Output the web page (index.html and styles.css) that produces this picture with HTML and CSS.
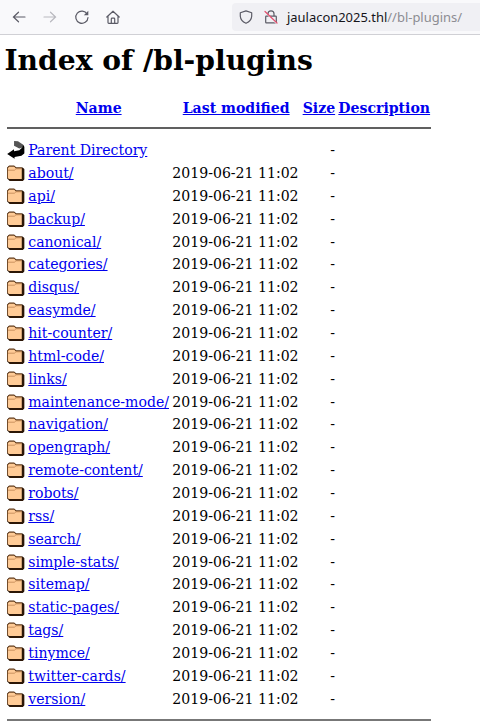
FILE: index.html
```html
<!DOCTYPE html>
<html lang="en">
<head>
<meta charset="utf-8">
<title>Index of /bl-plugins</title>
<link rel="stylesheet" href="styles.css">
</head>
<body>
<svg class="defs" width="0" height="0" aria-hidden="true">
  <symbol id="folder" viewBox="0 0 20 22">
    <path d="M.2 5 2.2 3H8.4L10.4 5H17.8L20 7.2V18.4L18 20.4H3L.2 17.6z" fill="#2b1606"/>
    <path d="M1 5.6 2.6 4H8L10 6H16.8V18.2H2.2L1 17z" fill="#ffcb96"/>
    <path d="M1 8.2H8.4L10.2 6.6H16.6" fill="none" stroke="#b67c48" stroke-width=".8"/>
    <path d="M.6 17.4V5.4L2.5 3.4H8.2L10.2 5.4H17" fill="none" stroke="#7a4c22" stroke-width=".8"/>
  </symbol>
  <symbol id="back" viewBox="0 0 20 22">
    <path d="M8 1 12.5 1.4 18 5V8.6L14 9.6 8 6.4z" fill="#555"/>
    <path d="M18 4.8 20 8V15L16.4 18 8.6 19.2V21.2L.2 16 8 10.4V12.8L14 11.6 17.4 8.4z" fill="#000"/>
  </symbol>
</svg>
<header class="toolbar">
  <svg class="nav" viewBox="0 0 16 16"><path d="M14 8H2.3M7.5 3.2 2.5 8l5 4.8"/></svg>
  <svg class="nav off" viewBox="0 0 16 16"><path d="M2 8h11.7M8.5 3.2l5 4.8-5 4.8"/></svg>
  <svg class="nav" viewBox="0 0 16 16"><path d="M13.2 5.2A6.1 6.1 0 1 0 14 8.5"/><path class="solid" d="M14.3 1.8v4.5H9.8z"/></svg>
  <svg class="nav" viewBox="0 0 16 16"><path d="M1.8 8 8 2.2 14.2 8M3 7.3v6.2q0 .8.8.8h8.4q.8 0 .8-.8V7.3M6.3 14V10q0-.8.8-.8h1.8q.8 0 .8.8v4"/></svg>
  <div class="urlbar">
    <svg class="shield" viewBox="0 0 14 14"><path d="M7 .9 12.7 2.8V6.3Q12.4 11 7 13.3 1.6 11 1.3 6.3V2.8z"/></svg>
    <svg class="lock" viewBox="0 0 14 14"><path d="M4 6V3.8a3 3 0 0 1 6 0V6M2.3 6.1h9.4q.6 0 .6.6v5.6q0 .6-.6.6H2.3q-.6 0-.6-.6V6.7q0-.6.6-.6z"/><path class="halo" d="M1.2 2.4 12.6 13.6"/><path class="slash" d="M1 1.5 13 13"/></svg>
    <span class="url">jaulacon2025.thl<span class="path">//bl-plugins/</span></span>
  </div>
</header>
<main>
  <h1>Index of /bl-plugins</h1>
  <div class="listing" id="listing">
    <div class="row head"><span></span><a href="#">Name</a><a href="#">Last modified</a><a href="#">Size</a><a href="#">Description</a></div>
    <hr>
    <div class="row"><svg class="icon"><use href="#back"/></svg><a href="#">Parent Directory</a><span></span><span class="size">-</span></div>
  </div>
</main>
<script src="listing.js"></script>
</body>
</html>
```
FILE: styles.css
```css
body {
  margin: 0;
  background: #fff;
  color: #000;
  font: 14.08px "DejaVu Serif", serif;
  overflow: hidden;
}
.defs { position: absolute; }
.toolbar {
  box-sizing: border-box;
  height: 35px;
  padding: 3px 0 4px 10.5px;
  display: flex;
  align-items: center;
  gap: 15.5px;
  background: #f9f9fb;
  border-bottom: 1px solid #d0d0d5;
}
.toolbar svg {
  flex: none;
  fill: none;
  stroke: #5b5b66;
  stroke-width: 1.2;
  stroke-linecap: round;
  stroke-linejoin: round;
}
.nav { width: 16px; height: 16px; }
.toolbar .off { stroke: #b9b9bf; }
.toolbar .solid { fill: #5b5b66; stroke: none; }
.urlbar {
  flex: 1;
  height: 28px;
  margin-left: 95.5px;
  padding-left: 7px;
  display: flex;
  align-items: center;
  background: #f0f0f4;
  border-radius: 4px 0 0 4px;
}
.shield { width: 14px; height: 14px; }
.lock { width: 14px; height: 14px; margin-left: 11px; }
.toolbar .halo { stroke: #f0f0f4; }
.toolbar .slash { stroke: #e2506f; }
.url {
  margin-left: 9px;
  font: 12.95px "Noto Sans", sans-serif;
  color: #15141a;
  white-space: nowrap;
}
.path { color: #8c8c92; }
main { padding-left: 4.4px; }
h1 {
  margin: 9px 0 0;
  font-size: 28.16px;
  line-height: 33px;
  white-space: nowrap;
}
.listing { width: 423.6px; padding: 20px 0 0 2.6px; }
.row {
  display: grid;
  grid-template-columns: 18px 142px 127.6px 32.4px 93px;
  column-gap: 2.7px;
  align-items: center;
  height: 22.87px;
  white-space: nowrap;
}
.head { font-weight: bold; text-align: center; }
.row a { color: #0000ee; }
.row:not(.head) a { padding-left: .6px; }
.size { text-align: right; }
.icon { width: 17.6px; height: 19.36px; }
hr {
  height: 2px;
  margin: 7px 0 9.8px;
  border: 0;
  background: #606060;
}
.row + hr:last-child { margin-top: 8.4px; background: #777; }
```
FILE: listing.js
```js
const names = ["about", "api", "backup", "canonical", "categories", "disqus", "easymde",
  "hit-counter", "html-code", "links", "maintenance-mode", "navigation", "opengraph",
  "remote-content", "robots", "rss", "search", "simple-stats", "sitemap", "static-pages",
  "tags", "tinymce", "twitter-cards", "version"];
const listing = document.getElementById("listing");
const rows = names.map(name => `<div class="row"><svg class="icon"><use href="#folder"/></svg><a href="#">${name}/</a><span>2019-06-21 11:02</span><span class="size">-</span></div>`);
listing.insertAdjacentHTML("beforeend", rows.join("") + "<hr>");
```
